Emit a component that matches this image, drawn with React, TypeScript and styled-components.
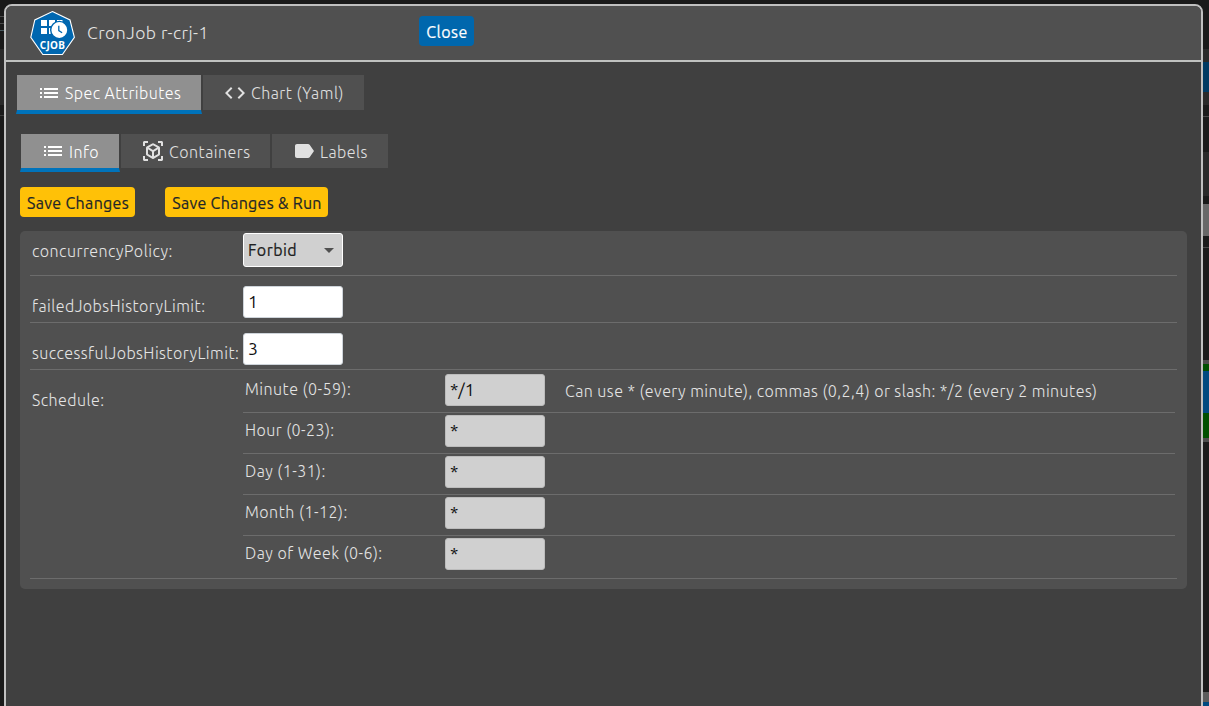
import React from "react";
import styled, { createGlobalStyle } from "styled-components";
import { MdArrowDropDown, MdCode, MdLabel, MdList, MdViewInAr } from "react-icons/md";

const GlobalStyle = createGlobalStyle`
  * { box-sizing: border-box; }
  html, body { margin: 0; height: 100%; overflow: hidden; background: #1a1a1a; }
  body { font: 300 16px/20px Ubuntu, "Noto Sans", sans-serif; color: #e4e4e4; }
`;

const Page = styled.div`
  display: flex;
  width: 1209px;
  height: 706px;
  background: #1a1a1a;
`;

const Strip = styled.div<{ $width: number }>`
  display: flex;
  flex-direction: column;
  flex: none;
  width: ${(p) => p.$width}px;
  overflow: hidden;
`;

const Block = styled.div<{ $height: number; $color?: string }>`
  flex: none;
  height: ${(p) => p.$height}px;
  background: ${(p) => p.$color ?? "transparent"};
`;

const Window = styled.main`
  display: flex;
  flex-direction: column;
  flex: none;
  width: 1199px;
  height: 710px;
  margin-top: 4px;
  border: 2px solid #c0c0c0;
  border-radius: 8px;
  background: #404040;
  overflow: hidden;
`;

const Header = styled.header`
  display: flex;
  align-items: flex-start;
  flex: none;
  height: 56px;
  padding-left: 23px;
  border-bottom: 2px solid #c0c2c0;
  background: #505050;
`;

const LogoSvg = styled.svg`
  display: block;
  flex: none;
  width: 48px;
  height: 48px;
  margin-top: 3px;
`;

const Text = styled.span<{ $spacing?: number }>`
  display: block;
  letter-spacing: ${(p) => p.$spacing ?? 0.45}px;
  white-space: nowrap;
`;

const Title = styled.h1`
  width: 332px;
  margin: 17px 0 0 10px;
  font-size: 17.6px;
  font-weight: 300;
  line-height: 20px;
`;

const Button = styled.button<{ $width: number; $kind: "primary" | "warning" }>`
  display: flex;
  justify-content: center;
  align-items: center;
  width: ${(p) => p.$width}px;
  height: 30px;
  padding: 1px 0 0 1px;
  border: 0;
  border-radius: 4px;
  background: ${(p) => (p.$kind === "primary" ? "#0067ad" : "#ffc107")};
  color: ${(p) => (p.$kind === "primary" ? "#fff" : "#212529")};
  font: 400 16px/20px Ubuntu, "Noto Sans", sans-serif;
  -webkit-text-stroke: 0.2px currentColor;
`;

const CloseButton = styled(Button)`
  margin-top: 10px;
`;

const Tabs = styled.nav<{ $offset: number; $top: number; $height: number }>`
  display: flex;
  flex: none;
  height: ${(p) => p.$height + 4}px;
  margin: ${(p) => p.$top}px 0 0 ${(p) => p.$offset}px;
`;

const Tab = styled.div<{ $width: number; $active?: boolean }>`
  display: flex;
  align-items: center;
  gap: 4px;
  width: ${(p) => p.$width}px;
  padding-left: 20px;
  border: 0 solid transparent;
  border-width: 0 1px 4px;
  border-bottom-color: ${(p) => (p.$active ? "#0073bb" : "transparent")};
  background: ${(p) => (p.$active ? "#909090" : "#505050")};
  background-clip: padding-box;
  color: ${(p) => (p.$active ? "#fff" : "#e0e0e0")};

  svg { flex: none; }
`;

const SubTab = styled(Tab)`
  ${Text} { padding-top: 2px; }
`;

const Actions = styled.div`
  display: flex;
  flex: none;
  gap: 30px;
  margin: 15px 0 0 14px;
`;

const Panel = styled.section`
  flex: none;
  width: 1167px;
  height: 358px;
  margin: 14px 0 0 14px;
  padding: 0 10px;
  border-radius: 5px;
  background: #505050;
`;

const Row = styled.div<{ $height: number }>`
  display: grid;
  grid-template-columns: 213px 1fr;
  height: ${(p) => p.$height}px;
  border-bottom: 1px solid #6c6c6c;
`;

const SubRow = styled(Row)`
  grid-template-columns: 202px 120px 1fr;
  margin-right: 2px;

  &:last-child { border-bottom: 0; }
`;

const Label = styled.div<{ $top: number }>`
  padding: ${(p) => p.$top}px 0 0 2px;
`;

const Hint = styled(Label)`
  padding-left: 0;
`;

const Field = styled.div<{ $top: number; $muted?: boolean }>`
  width: 100px;
  height: 32px;
  margin-top: ${(p) => p.$top}px;
  padding: 5px 0 0 4px;
  border: 1px solid ${(p) => (p.$muted ? "#bcbcbc" : "#ced4da")};
  border-radius: 3px;
  background: ${(p) => (p.$muted ? "#d0d0d0" : "#fff")};
  color: #101010;
  font-size: 17.6px;
  font-weight: 400;
`;

const Select = styled.div`
  display: flex;
  align-items: center;
  justify-content: space-between;
  width: 100px;
  height: 34px;
  margin-top: 2px;
  padding: 0 1px 0 4px;
  border: 1px solid #fff;
  border-radius: 3px;
  background: #d0d0d0;
  color: #202020;
  font-weight: 400;
  -webkit-text-stroke: 0.2px currentColor;

  svg { fill: #505050; }
`;

const leftStrip: [number, string?][] = [
  [16], [1, "#4a4a4a"], [6], [1, "#4a4a4a"], [6], [1, "#4a5a60"], [18],
  [56, "#2a2a2a"], [10], [1, "#3a3a3a"],
];

const rightStrip: [number, string?][] = [
  [49], [13, "#2a2a2a"], [30, "#003a63"], [13, "#2a2a2a"], [11], [1, "#484848"],
  [35], [44, "#2a2a2a"], [8], [32, "#686868"], [11], [1, "#484848"], [112],
  [4, "#4c4c4c"], [7, "#005000"], [42, "#004a80"], [25, "#005000"], [4, "#4c4c4c"],
  [250], [10, "#5c5c5c"], [4, "#004a80"],
];

const scheduleRows = [
  { label: "Minute (0-59):", spacing: 0.48, value: "*/1", height: 43 },
  { label: "Hour (0-23):", spacing: 0.45, value: "*", height: 41 },
  { label: "Day (1-31):", spacing: 0.45, value: "*", height: 41 },
  { label: "Month (1-12):", spacing: 0.5, value: "*", height: 41 },
  { label: "Day of Week (0-6):", spacing: 0.47, value: "*", height: 42 },
];

function CronJobLogo() {
  return (
    <LogoSvg viewBox="29 9 48 48">
      <path d="M52.4 11.5 70 20l4.4 17.3-12 17.2H42.8l-12-17.2L34.8 20z" fill="#0067b0" stroke="#fff" strokeWidth="1.1" />
      <path d="M41 20h6v6h-6zM49 20h6v6h-6zM57 20h5.5v3H57zM41 28h6v6h-6zM49 28h6v6h-6z" fill="#fff" />
      <circle cx="59.3" cy="30" r="8.6" fill="#fff" stroke="#0067b0" strokeWidth="1.4" />
      <path d="M58.8 25.8v4.8l3.3 2.2" fill="none" stroke="#0067b0" strokeWidth="1.3" />
      <text x="52.3" y="48.9" textAnchor="middle" fill="#fff" fontFamily="Noto Sans, sans-serif" fontSize="10" fontWeight="700" textLength="25">CJOB</text>
    </LogoSvg>
  );
}

export default function App() {
  return (
    <>
      <GlobalStyle />
      <Page>
        <Strip $width={4}>
          {leftStrip.map(([h, c], i) => <Block key={i} $height={h} $color={c} />)}
        </Strip>
        <Window>
          <Header>
            <CronJobLogo />
            <Title><Text>CronJob r-crj-1</Text></Title>
            <CloseButton $width={55} $kind="primary"><Text>Close</Text></CloseButton>
          </Header>
          <Tabs $offset={10} $top={13} $height={35}>
            <Tab $width={186} $active><MdList size={24} /><Text>Spec Attributes</Text></Tab>
            <Tab $width={163}><MdCode size={24} /><Text $spacing={0.48}>Chart (Yaml)</Text></Tab>
          </Tabs>
          <Tabs $offset={14} $top={20} $height={34}>
            <SubTab $width={100} $active><MdList size={24} /><Text>Info</Text></SubTab>
            <SubTab $width={151}><MdViewInAr size={24} /><Text $spacing={0.48}>Containers</Text></SubTab>
            <SubTab $width={118}><MdLabel size={24} /><Text>Labels</Text></SubTab>
          </Tabs>
          <Actions>
            <Button $width={115} $kind="warning"><Text $spacing={0.33}>Save Changes</Text></Button>
            <Button $width={163} $kind="warning"><Text $spacing={0.3}>Save Changes &amp; Run</Text></Button>
          </Actions>
          <Panel>
            <Row $height={45}>
              <Label $top={10}><Text $spacing={0.48}>concurrencyPolicy:</Text></Label>
              <Select><Text>Forbid</Text><MdArrowDropDown size={24} /></Select>
            </Row>
            <Row $height={47}>
              <Label $top={20}><Text>failedJobsHistoryLimit:</Text></Label>
              <Field $top={10}>1</Field>
            </Row>
            <Row $height={47}>
              <Label $top={20}><Text>successfulJobsHistoryLimit:</Text></Label>
              <Field $top={10}>3</Field>
            </Row>
            <Row $height={209}>
              <Label $top={20}><Text>Schedule:</Text></Label>
              <div>
                {scheduleRows.map((row, i) => (
                  <SubRow key={row.label} $height={row.height}>
                    <Label $top={i === 0 ? 9 : 7}><Text $spacing={row.spacing}>{row.label}</Text></Label>
                    <Field $top={i === 0 ? 4 : 2} $muted>{row.value}</Field>
                    {i === 0 && (
                      <Hint $top={11}>
                        <Text>Can use * (every minute), commas (0,2,4) or slash: */2 (every 2 minutes)</Text>
                      </Hint>
                    )}
                  </SubRow>
                ))}
              </div>
            </Row>
          </Panel>
        </Window>
        <Strip $width={6}>
          {rightStrip.map(([h, c], i) => <Block key={i} $height={h} $color={c} />)}
        </Strip>
      </Page>
    </>
  );
}
